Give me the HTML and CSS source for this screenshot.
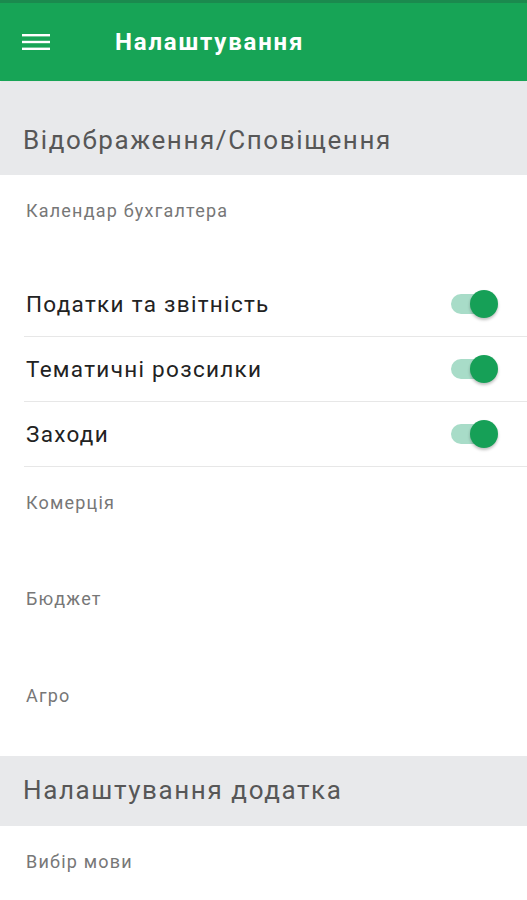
FILE: index.html
```html
<!DOCTYPE html>
<html lang="uk">
<head>
    <meta charset="UTF-8">
    <meta name="viewport" content="width=device-width, initial-scale=1.0">
    <title>Налаштування</title>
    <link rel="stylesheet" href="styles.css">
</head>
<body>
    <header class="appbar">
        <button class="menu-btn" aria-label="Меню">
            <svg width="28" height="16" viewBox="0 0 28 16">
                <rect x="0" y="0" width="28" height="2.4" fill="#fff"/>
                <rect x="0" y="6.8" width="28" height="2.4" fill="#fff"/>
                <rect x="0" y="13.6" width="28" height="2.4" fill="#fff"/>
            </svg>
        </button>
        <h1>Налаштування</h1>
    </header>

    <main class="settings">
        <div class="section first">Відображення/Сповіщення</div>

        <div class="category">Календар бухгалтера</div>

        <div class="row">
            <span>Податки та звітність</span>
            <span class="toggle on"></span>
        </div>
        <div class="row">
            <span>Тематичні розсилки</span>
            <span class="toggle on"></span>
        </div>
        <div class="row">
            <span>Заходи</span>
            <span class="toggle on"></span>
        </div>

        <div class="category">Комерція</div>
        <div class="category">Бюджет</div>
        <div class="category">Агро</div>

        <div class="section">Налаштування додатка</div>

        <div class="category">Вибір мови</div>
    </main>
</body>
</html>
```

FILE: styles.css
```css
:root {
    --green: #17a456;
    --green-dark: #1b8a4e;
    --band: #e8e9eb;
    --divider: #e7e7e7;
    --font-family: 'Roboto', 'Noto Sans', sans-serif;
}

body {
    margin: 0;
    font-family: var(--font-family);
    background: #fff;
    color: #222;
}

.appbar {
    display: flex;
    align-items: center;
    height: 78px;
    border-top: 3px solid var(--green-dark);
    background: var(--green);
    color: #fff;
    box-shadow: 0 1px 2px rgba(0, 0, 0, 0.15);
}

.menu-btn {
    display: flex;
    background: none;
    border: none;
    padding: 0;
    margin: 0 0 0 22px;
    cursor: pointer;
}

.appbar h1 {
    margin: 0 0 0 65px;
    font-size: 24px;
    font-weight: 700;
    letter-spacing: 1.8px;
}

.section {
    background: var(--band);
    color: #575757;
    font-size: 26px;
    line-height: 32px;
    letter-spacing: 1.6px;
    padding: 18px 23px 20px;
}

.section.first {
    margin-top: 1px;
    padding-top: 42px;
    padding-bottom: 19px;
}

.category {
    height: 96.5px;
    box-sizing: border-box;
    padding: 25px 26px 0;
    font-size: 18px;
    line-height: 22px;
    letter-spacing: 1.2px;
    color: #777;
}

.row {
    display: flex;
    align-items: center;
    justify-content: space-between;
    height: 64px;
    margin-left: 24px;
    padding-right: 32px;
    border-bottom: 1px solid var(--divider);
    font-size: 22.5px;
    letter-spacing: 1.3px;
    color: #222;
}

.row span:first-child {
    margin-left: 2px;
}

.toggle {
    position: relative;
    width: 44px;
    height: 20px;
    border-radius: 10px;
    background: #a8dcc8;
}

.toggle.on::after {
    content: "";
    position: absolute;
    right: -3px;
    top: -4px;
    width: 28px;
    height: 28px;
    border-radius: 50%;
    background: #16a057;
    box-shadow: 0 2px 3px rgba(0, 0, 0, 0.25);
}
```
